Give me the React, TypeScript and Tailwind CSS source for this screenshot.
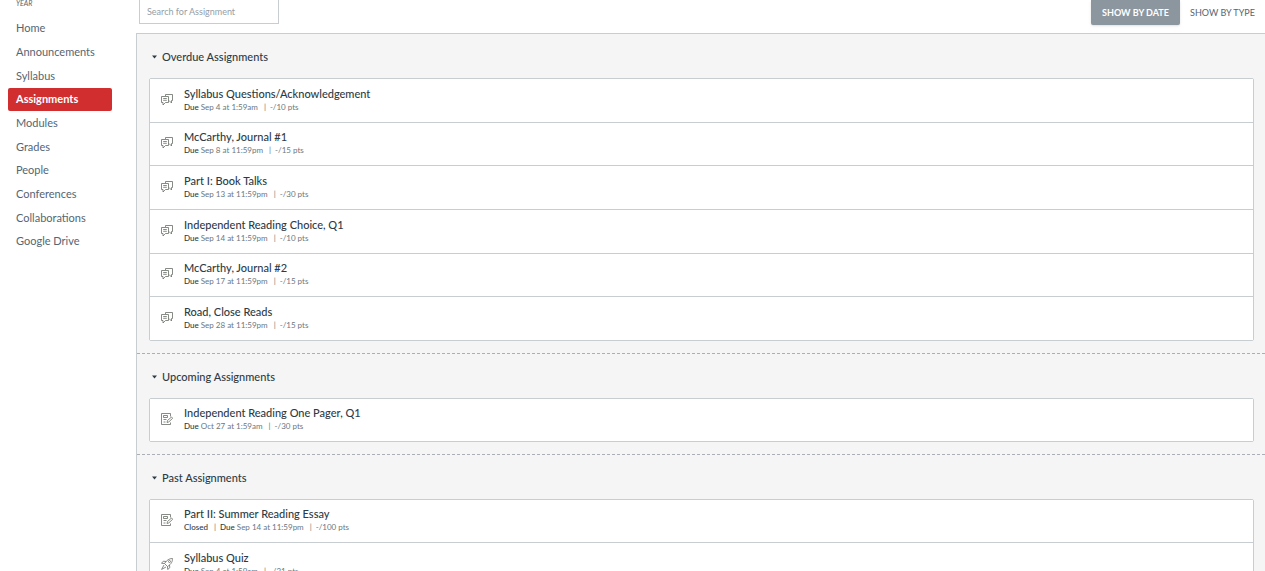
import type { ReactNode } from "react";

type Kind = "discussion" | "assignment" | "quiz";

type Item = {
  title: string;
  kind: Kind;
  due: string;
  points: string;
  closed?: boolean;
};

const navItems = [
  "Home",
  "Announcements",
  "Syllabus",
  "Assignments",
  "Modules",
  "Grades",
  "People",
  "Conferences",
  "Collaborations",
  "Google Drive",
];

const groups: { name: string; items: Item[] }[] = [
  {
    name: "Overdue Assignments",
    items: [
      { title: "Syllabus Questions/Acknowledgement", kind: "discussion", due: "Sep 4 at 1:59am", points: "-/10 pts" },
      { title: "McCarthy, Journal #1", kind: "discussion", due: "Sep 8 at 11:59pm", points: "-/15 pts" },
      { title: "Part I: Book Talks", kind: "discussion", due: "Sep 13 at 11:59pm", points: "-/30 pts" },
      { title: "Independent Reading Choice, Q1", kind: "discussion", due: "Sep 14 at 11:59pm", points: "-/10 pts" },
      { title: "McCarthy, Journal #2", kind: "discussion", due: "Sep 17 at 11:59pm", points: "-/15 pts" },
      { title: "Road, Close Reads", kind: "discussion", due: "Sep 28 at 11:59pm", points: "-/15 pts" },
    ],
  },
  {
    name: "Upcoming Assignments",
    items: [
      { title: "Independent Reading One Pager, Q1", kind: "assignment", due: "Oct 27 at 1:59am", points: "-/30 pts" },
    ],
  },
  {
    name: "Past Assignments",
    items: [
      { title: "Part II: Summer Reading Essay", kind: "assignment", due: "Sep 14 at 11:59pm", points: "-/100 pts", closed: true },
      { title: "Syllabus Quiz", kind: "quiz", due: "Sep 4 at 1:59am", points: "-/21 pts" },
    ],
  },
];

const iconPaths: Record<Kind, ReactNode> = {
  discussion: (
    <>
      <path d="M4.5 2.5v-2h7v6h-1v2.500L8 6.500" />
      <path d="M4.500 2.500H.5v6h1.500v2.500L4.500 8.500H7.500v-6z" />
      <path d="M2.200 4.500h3.600M2.200 6.300h3.600" />
    </>
  ),
  assignment: (
    <>
      <path d="M9.5 3.5v-3h-9v11h9v-2" />
      <path d="M2.500 2.500h4v2h-4zM2.500 6.500h3M2.500 9h2" />
      <path d="M6 9.500l.5-2 4-3.500 1.200 1.300-3.900 3.600z" />
    </>
  ),
  quiz: (
    <>
      <path d="M11.5.5C8 .5 6 2 3.500 5.500l3 3C10.500 6 11.500 3.500 11.500.5z" />
      <path d="M5 3.500l-2.700-.3L.5 5.300l3 .2M8.500 7l.3 2.700-2.100 1.800-.2-3" />
      <path d="M3 7L.6 11.400 5 9" />
      <circle cx="8.500" cy="3.500" r="1" />
    </>
  ),
};

function KindIcon({ kind }: { kind: Kind }) {
  return (
    <svg
      viewBox="0 0 12 12"
      className="mb-0.5 h-3 w-3 shrink-0 text-[#686d66]"
      fill="none"
      stroke="currentColor"
      strokeWidth="0.8"
      strokeLinejoin="round"
      aria-hidden="true"
    >
      {iconPaths[kind]}
    </svg>
  );
}

function AssignmentRow({ item }: { item: Item }) {
  return (
    <li
      className={
        item.kind === "discussion"
          ? "flex min-h-11 items-center gap-[11px] border-b border-[#c7cdd1] bg-white pl-[11px] last:min-h-[43px] last:border-b-0 nth-[3n+2]:min-h-[43px]"
          : "flex min-h-[43px] items-center gap-[11px] border-b border-[#c7cdd1] bg-white pl-[11px] last:border-b-0 only:min-h-[42px]"
      }
    >
      <KindIcon kind={item.kind} />
      <div className="pb-0.5">
        <a href="#" className="block text-[11px] leading-[14px] font-medium text-[#2d3b45]">
          {item.title}
        </a>
        <div className="flex text-[8px] leading-3 text-[#6b7780]">
          {item.closed && (
            <>
              <span className="font-medium text-[#2d3b45]">Closed</span>
              <span className="mr-1 ml-1.5">|</span>
            </>
          )}
          <span>
            <span className="font-medium text-[#2d3b45]">Due</span> {item.due}
          </span>
          <span className="mr-1 ml-1.5">|</span>
          <span>{item.points}</span>
        </div>
      </div>
    </li>
  );
}

export default function App() {
  return (
    <div className="flex h-screen overflow-hidden bg-white font-['Lato',sans-serif]">
      <aside className="w-[136px] shrink-0 pl-2">
        <p className="h-[17px] pl-2 text-[7px] leading-[7px] text-[#556572] italic">YEAR</p>
        <nav aria-label="Course">
          <ul className="w-[104px]">
            {navItems.map((name) => (
              <li key={name} className="flex h-6 nth-[3n+1]:h-[23px]">
                <a
                  href="#"
                  className={
                    name === "Assignments"
                      ? "flex flex-1 items-center rounded-xs bg-[#d02e2f] px-2 text-[11px] font-bold text-white"
                      : "flex flex-1 items-center px-2 text-[11px] text-[#556572]"
                  }
                  aria-current={name === "Assignments" ? "page" : undefined}
                >
                  {name}
                </a>
              </li>
            ))}
          </ul>
        </nav>
      </aside>

      <main className="min-w-0 flex-1">
        <div className="flex h-[33px] items-start justify-between pl-[3px]">
          <input
            type="text"
            aria-label="Search for Assignment"
            placeholder="Search for Assignment"
            className="h-6 w-[140px] border border-t-0 border-[#c7cdd1] px-[7px] text-[9px] outline-none placeholder:text-[#959ea6]"
          />
          <div className="flex text-[9px]">
            <button
              type="button"
              aria-pressed="true"
              className="h-[25px] w-[89px] rounded-b-xs bg-[#8b969e] font-bold text-white shadow-sm"
            >
              SHOW BY DATE
            </button>
            <button type="button" aria-pressed="false" className="h-[25px] w-[85px] text-[#556572]">
              SHOW BY TYPE
            </button>
          </div>
        </div>

        <div className="border-t border-l border-[#c7cdd1] bg-[#f5f5f5]">
          {groups.map((group) => (
            <section key={group.name} className="border-b border-dashed border-[#aab0b5] px-3 pb-3 last:border-b-0">
              <h2>
                <button
                  type="button"
                  aria-expanded="true"
                  className="flex h-11 items-center gap-[5px] pt-0.5 pl-[3px] text-[11px] font-medium text-[#2d3b45]"
                >
                  <svg viewBox="0 0 5 4" className="h-1 w-[5px]" fill="currentColor" aria-hidden="true">
                    <path d="M0 .5h5l-2.500 3z" />
                  </svg>
                  {group.name}
                </button>
              </h2>
              <ul className="mr-[-1px] rounded-xs border border-[#c7cdd1]">
                {group.items.map((item) => (
                  <AssignmentRow key={item.title} item={item} />
                ))}
              </ul>
            </section>
          ))}
        </div>
      </main>
    </div>
  );
}
